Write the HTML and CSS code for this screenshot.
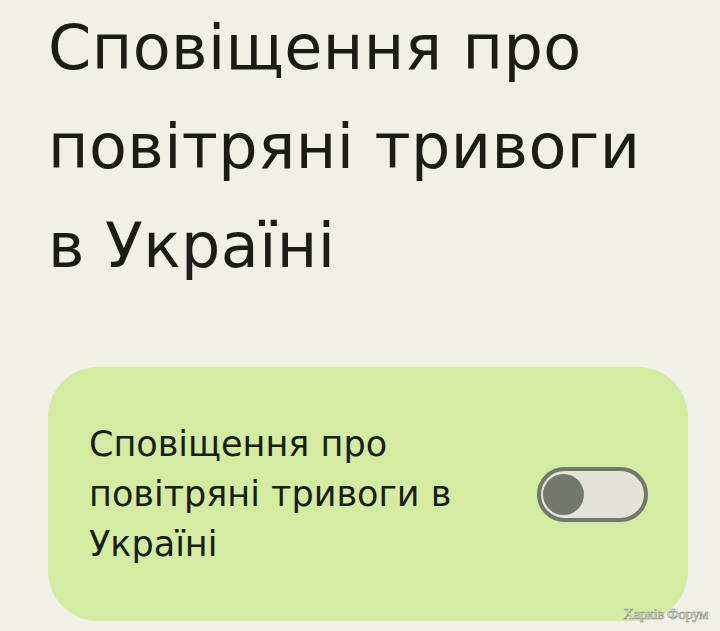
FILE: index.html
```html
<!DOCTYPE html>
<html lang="uk">
<head>
<meta charset="utf-8">
<title>Сповіщення про повітряні тривоги в Україні</title>
<link rel="stylesheet" href="styles.css">
</head>
<body>
<main class="screen">
  <h1 class="title">Сповіщення про повітряні тривоги в Україні</h1>
  <section class="card">
    <p class="card-label">Сповіщення про повітряні тривоги в Україні</p>
    <div class="switch" role="switch" aria-checked="false">
      <span class="thumb"></span>
    </div>
  </section>
  <div class="watermark">Харків Форум</div>
</main>
</body>
</html>
```

FILE: styles.css
```css
html, body {
  margin: 0;
  padding: 0;
  background: #f0f0e6;
}
.screen {
  position: relative;
  width: 720px;
  height: 631px;
  overflow: hidden;
  font-family: "DejaVu Sans", "Noto Sans", sans-serif;
}
.title {
  margin: -2px 0 0;
  padding: 0 60px 0 48px;
  font-size: 62px;
  font-weight: 400;
  line-height: 99px;
  color: #1c1c17;
  letter-spacing: 0.4px;
}
.card {
  margin: 72px 32px 0 48px;
  height: 254px;
  box-sizing: border-box;
  padding: 0 40px 0 41px;
  background: #d3eca2;
  border-radius: 50px;
  display: flex;
  align-items: center;
  gap: 40px;
}
.card-label {
  margin: 0;
  flex: 1;
  font-size: 35px;
  line-height: 50px;
  color: #172010;
}
.switch {
  flex: none;
  width: 111px;
  height: 55px;
  box-sizing: border-box;
  border: 4px solid #74776b;
  border-radius: 28px;
  background: #e3e3d8;
  display: flex;
  align-items: center;
  padding-left: 2px;
}
.thumb {
  width: 41px;
  height: 41px;
  border-radius: 50%;
  background: #74776b;
}
.watermark {
  position: absolute;
  right: 12px;
  bottom: 8px;
  font-family: "Liberation Serif", serif;
  font-size: 15px;
  letter-spacing: -0.5px;
  color: #ffffff;
  -webkit-text-stroke: 0.7px #9a9a94;
}
```
